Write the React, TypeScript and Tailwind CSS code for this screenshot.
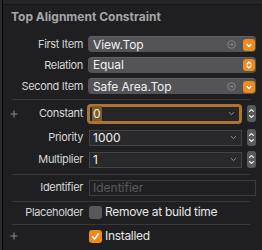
const font = { fontFamily: "Inter, 'Liberation Sans', sans-serif" }

function Plus() {
  return (
    <svg width="8" height="8" viewBox="0 0 8 8" className="absolute left-[7px]">
      <path d="M4 0.5V7.5M0.5 4H7.5" stroke="#8c8c8c" strokeWidth="1" />
    </svg>
  )
}

function Label({ text, plus }: { text: string; plus?: boolean }) {
  return (
    <div className="relative w-[81px] shrink-0 flex items-center justify-end pr-[1px] text-[11px] tracking-[-0.35px] text-[#d6d6d6]">
      {plus && <Plus />}
      {text}
    </div>
  )
}

function OrangeButton({ both }: { both?: boolean }) {
  return (
    <div className="w-[12px] h-[12px] rounded-[3px] bg-[#ef8a1d] flex items-center justify-center">
      <svg width="8" height="10" viewBox="0 0 8 10">
        {both ? (
          <path d="M2 4L4 2L6 4M2 6L4 8L6 6" stroke="white" strokeWidth="1.3" fill="none" strokeLinecap="round" strokeLinejoin="round" />
        ) : (
          <path d="M2 4.5L4 6.5L6 4.5" stroke="white" strokeWidth="1.4" fill="none" strokeLinecap="round" strokeLinejoin="round" />
        )}
      </svg>
    </div>
  )
}

function GoIcon() {
  return (
    <svg width="9" height="9" viewBox="0 0 9 9" className="mr-[7px]">
      <circle cx="4.5" cy="4.5" r="3.8" stroke="#8a8a8a" strokeWidth="0.9" fill="none" />
      <path d="M2.6 4.5H6M4.6 3.1L6 4.5L4.6 5.9" stroke="#8a8a8a" strokeWidth="0.9" fill="none" />
    </svg>
  )
}

function Popup({ value, go, both }: { value: string; go?: boolean; both?: boolean }) {
  return (
    <div className="flex-1 h-[16px] rounded-[4px] bg-[#545457] border-t border-[#626265] flex items-center pl-[5px] pr-[1px] text-[12px] tracking-[-0.1px] text-[#f0f0f0]">
      <span className="flex-1">{value}</span>
      {go && <GoIcon />}
      <OrangeButton both={both} />
    </div>
  )
}

function Stepper() {
  return (
    <div className="w-[9px] h-[17px] rounded-[3px] bg-[#5a5a5d] flex items-center justify-center ml-[5px]">
      <svg width="7" height="13" viewBox="0 0 7 13">
        <path d="M1.5 4.5L3.5 2.5L5.5 4.5M1.5 8.5L3.5 10.5L5.5 8.5" stroke="#e4e4e4" strokeWidth="1.1" fill="none" strokeLinecap="round" strokeLinejoin="round" />
      </svg>
    </div>
  )
}

function Chevron() {
  return (
    <svg width="7" height="5" viewBox="0 0 7 5" className="mr-[4px]">
      <path d="M1 1.2L3.5 3.6L6 1.2" stroke="#9a9a9a" strokeWidth="0.9" fill="none" />
    </svg>
  )
}

function NumberField({ value, focused }: { value: string; focused?: boolean }) {
  return (
    <div className="flex-1 flex items-center">
      <div
        className={
          focused
            ? "flex-1 h-[20px] -ml-[2px] rounded-[4px] border-[3px] border-[#a8762f] bg-[#262628] flex items-center pl-[2px] text-[12px] text-[#f0f0f0]"
            : "flex-1 h-[16px] border border-[#444447] bg-[#29292b] flex items-center pl-[3px] text-[12px] text-[#f0f0f0]"
        }
      >
        <span className="flex-1">
          {focused ? <span className="bg-[#7d5a2c] px-[1px]">{value}</span> : value}
        </span>
        <Chevron />
      </div>
      <Stepper />
    </div>
  )
}

function Separator({ mt }: { mt: string }) {
  return <div className={`${mt} ml-[9px] mr-[6px] h-px bg-[#38383a]`} />
}

export default function App() {
  return (
    <div className="w-[262px] h-[250px] flex overflow-hidden" style={font}>
      <div className="w-[2px] bg-[#2b2b2d]" />
      <div className="w-px bg-black" />
      <div className="flex-1 bg-[#1f1f21] flex flex-col pr-[6px]">
        <div className="h-[4px] -mr-[6px] bg-[#252527] border-b border-[#161618] box-content" />
        <div className="mt-[4px] h-[16px] pl-[8px] text-[12px] font-bold text-[#a6a6a8] flex items-center">
          Top Alignment Constraint
        </div>

        <div className="mt-[11px] flex items-center">
          <Label text="First Item" />
          <div className="ml-[4px] flex-1 flex">
            <Popup value="View.Top" go />
          </div>
        </div>
        <div className="mt-[4px] flex items-center">
          <Label text="Relation" />
          <div className="ml-[4px] flex-1 flex">
            <Popup value="Equal" both />
          </div>
        </div>
        <div className="mt-[5px] flex items-center">
          <Label text="Second Item" />
          <div className="ml-[4px] flex-1 flex">
            <Popup value="Safe Area.Top" go />
          </div>
        </div>

        <Separator mt="mt-[4px]" />

        <div className="mt-[6px] h-[16px] flex items-center">
          <Label text="Constant" plus />
          <div className="ml-[5px] flex-1 flex">
            <NumberField value="0" focused />
          </div>
        </div>
        <div className="mt-[8px] h-[16px] flex items-center">
          <Label text="Priority" />
          <div className="ml-[5px] flex-1 flex">
            <NumberField value="1000" />
          </div>
        </div>
        <div className="mt-[6px] h-[16px] flex items-center">
          <Label text="Multiplier" />
          <div className="ml-[5px] flex-1 flex">
            <NumberField value="1" />
          </div>
        </div>

        <Separator mt="mt-[6px]" />

        <div className="mt-[5px] h-[16px] flex items-center">
          <Label text="Identifier" />
          <div className="ml-[5px] flex-1 h-[16px] border border-[#3c3c3e] bg-[#1f1f21] flex items-center pl-[3px] text-[12px] text-[#5c5c5e]">
            Identifier
          </div>
        </div>

        <Separator mt="mt-[5px]" />

        <div className="mt-[4px] h-[13px] flex items-center">
          <Label text="Placeholder" />
          <div className="ml-[5px] w-[13px] h-[13px] rounded-[3px] bg-[#58585b]" />
          <span className="ml-[3px] text-[12px] tracking-[-0.3px] text-[#e6e6e6]">Remove at build time</span>
        </div>

        <Separator mt="mt-[5px]" />

        <div className="mt-[5px] h-[13px] flex items-center">
          <Label text="" plus />
          <div className="ml-[5px] w-[13px] h-[13px] rounded-[3px] bg-[#ef8a1d] flex items-center justify-center">
            <svg width="9" height="9" viewBox="0 0 9 9">
              <path d="M1.5 4.8L3.6 7L7.5 1.8" stroke="white" strokeWidth="1.5" fill="none" strokeLinecap="round" strokeLinejoin="round" />
            </svg>
          </div>
          <span className="ml-[3px] text-[12px] tracking-[-0.3px] text-[#e6e6e6]">Installed</span>
        </div>
        <div className="flex-1" />
      </div>
    </div>
  )
}
